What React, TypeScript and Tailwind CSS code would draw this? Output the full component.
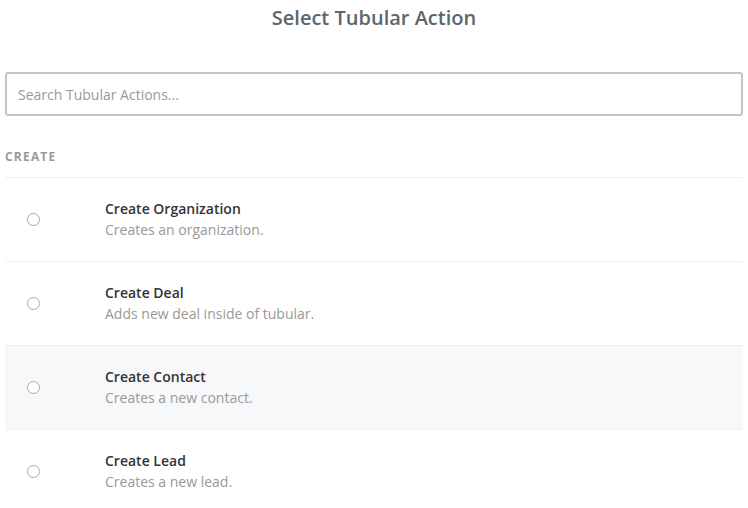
const actions = [
  { title: 'Create Organization', desc: 'Creates an organization.' },
  { title: 'Create Deal', desc: 'Adds new deal inside of tubular.' },
  { title: 'Create Contact', desc: 'Creates a new contact.', hover: true },
  { title: 'Create Lead', desc: 'Creates a new lead.' },
];

function ActionRow({ title, desc, hover }: { title: string; desc: string; hover?: boolean }) {
  return (
    <label
      className={`flex h-[84px] items-center border-t border-[#eeeff0] ${hover ? 'bg-[#f7f8fa]' : 'bg-white'}`}
    >
      <span className="ml-[22px] h-[13px] w-[13px] rounded-full border border-[#a9a9a9] bg-white" />
      <div className="ml-[65px] flex flex-col">
        <span className="text-[14px] font-semibold leading-[19px] text-[#333]">{title}</span>
        <span className="mt-[2px] text-[14px] leading-[20px] text-[#999]">{desc}</span>
      </div>
    </label>
  );
}

export default function App() {
  return (
    <div className="min-h-screen bg-white px-[5px] font-['Open_Sans',sans-serif]">
      <h1 className="flex h-[36px] items-center justify-center text-[20px] font-semibold text-[#5c666c]">
        Select Tubular Action
      </h1>
      <div className="mt-[36px] flex h-[44px] items-center rounded-[3px] border-2 border-[#bdc6cd] px-[11px]">
        <input
          placeholder="Search Tubular Actions..."
          className="w-full bg-transparent text-[14px] text-[#333] outline-none placeholder:text-[#999]"
        />
      </div>
      <div className="mt-[33px] pb-[12px] text-[12px] font-bold leading-[16px] tracking-[0.1em] text-[#999]">
        CREATE
      </div>
      <div>
        {actions.map((a) => (
          <ActionRow key={a.title} {...a} />
        ))}
      </div>
    </div>
  );
}
